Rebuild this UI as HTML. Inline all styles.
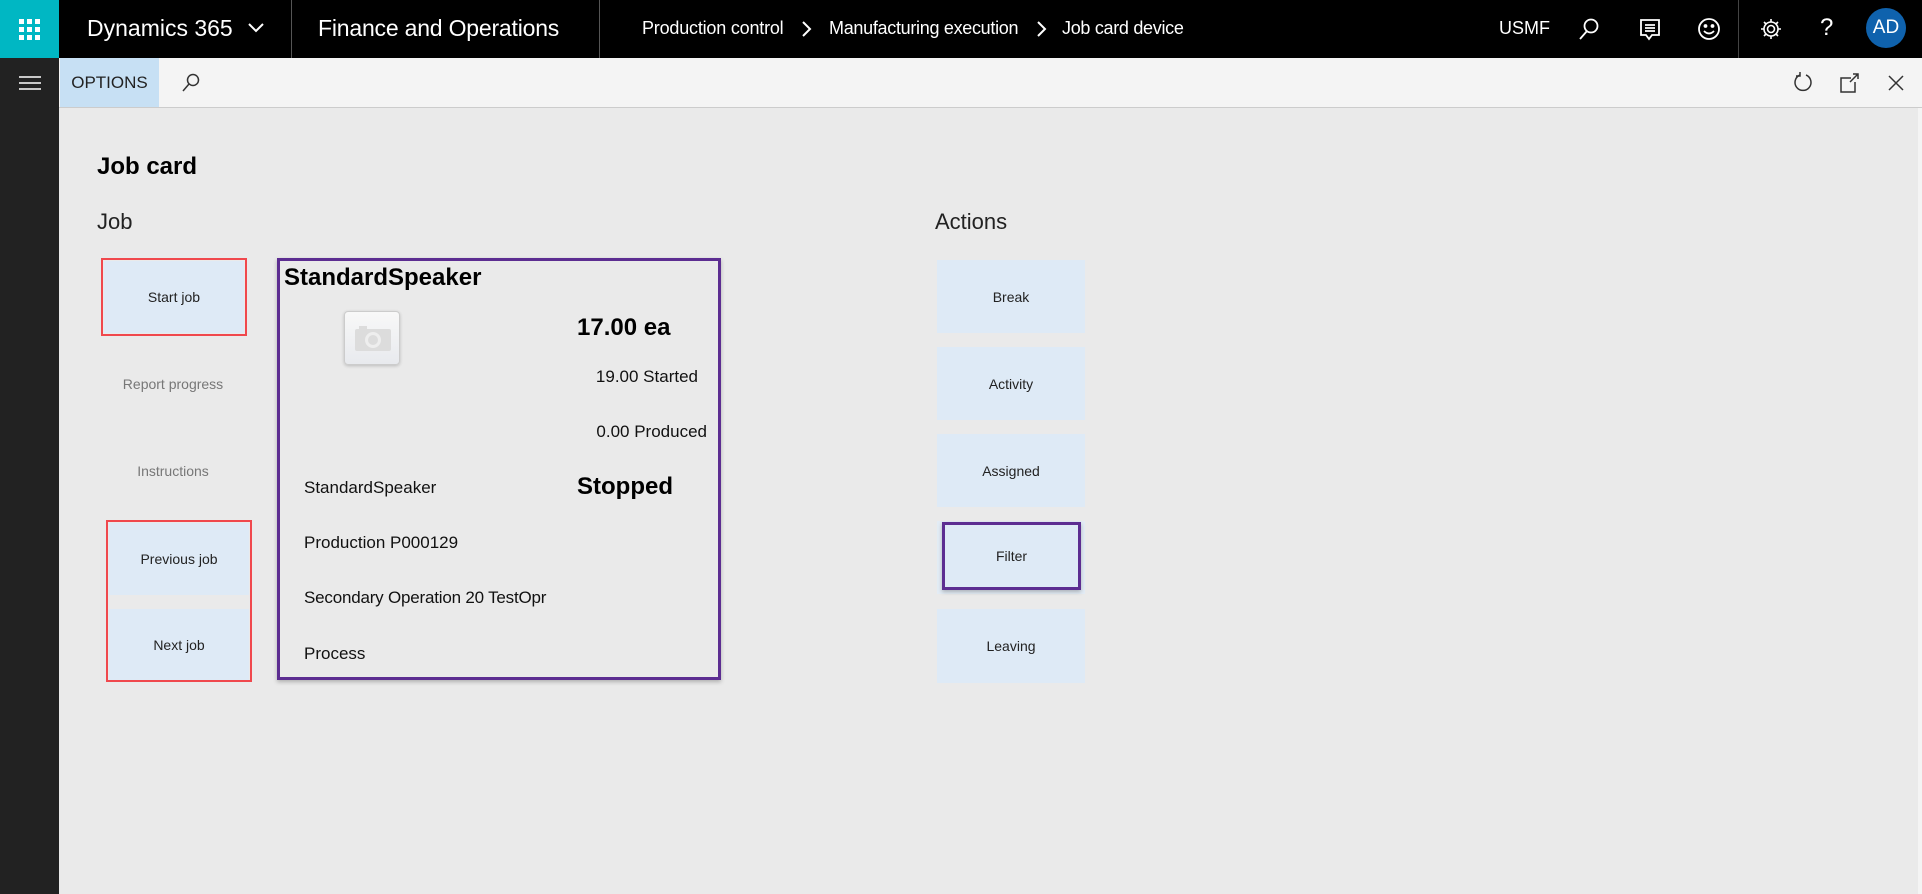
<!DOCTYPE html>
<html><head><meta charset="utf-8"><style>
*{margin:0;padding:0;box-sizing:border-box}
body{width:1922px;height:894px;overflow:hidden;background:#eaeaea;font-family:"Liberation Sans",sans-serif;position:relative;color:#000}
.a{position:absolute;white-space:nowrap}
.top{left:0;top:0;width:1922px;height:58px;background:#000;color:#fff}
.btn{position:absolute;background:#deeaf6;font-size:14px;color:#222;display:flex;align-items:center;justify-content:center}
.red{position:absolute;border:2px solid #f0484d}
.t{font-size:17px;color:#111}
</style></head><body>
<div class="a top"></div>
<div class="a" style="left:0;top:0;width:59px;height:58px;background:#00b7c3"></div>
<svg class="a" style="left:19px;top:19px" width="21" height="21" fill="#fff"><g><rect x="0" y="0" width="5" height="5"/><rect x="8" y="0" width="5" height="5"/><rect x="16" y="0" width="5" height="5"/><rect x="0" y="8" width="5" height="5"/><rect x="8" y="8" width="5" height="5"/><rect x="16" y="8" width="5" height="5"/><rect x="0" y="16" width="5" height="5"/><rect x="8" y="16" width="5" height="5"/><rect x="16" y="16" width="5" height="5"/></g></svg>
<div class="a" style="left:87px;top:15px;font-size:23px;color:#fff">Dynamics 365</div>
<svg class="a" style="left:247px;top:22px" width="18" height="12"><path d="M2 2l7 7 7-7" stroke="#fff" stroke-width="2" fill="none"/></svg>
<div class="a" style="left:291px;top:0;width:1px;height:58px;background:#555"></div>
<div class="a" style="left:318px;top:15px;font-size:23px;color:#fff;letter-spacing:-0.2px">Finance and Operations</div>
<div class="a" style="left:599px;top:0;width:1px;height:58px;background:#555"></div>
<div class="a" style="left:642px;top:18px;font-size:18px;color:#fff;letter-spacing:-0.2px">Production control</div>
<svg class="a" style="left:800px;top:20px" width="12" height="18"><path d="M3 2l7 7-7 7" stroke="#fff" stroke-width="2" fill="none"/></svg>
<div class="a" style="left:829px;top:18px;font-size:18px;color:#fff;letter-spacing:-0.3px">Manufacturing execution</div>
<svg class="a" style="left:1035px;top:20px" width="12" height="18"><path d="M3 2l7 7-7 7" stroke="#fff" stroke-width="2" fill="none"/></svg>
<div class="a" style="left:1062px;top:18px;font-size:18px;color:#fff;letter-spacing:-0.3px">Job card device</div>
<div class="a" style="left:1499px;top:18px;font-size:18px;color:#fff">USMF</div>
<svg class="a" style="left:1577px;top:17px" width="24" height="24" fill="none" stroke="#fff" stroke-width="1.8"><circle cx="14" cy="9" r="6.5"/><path d="M10 14L3 22"/></svg>
<svg class="a" style="left:1639px;top:18px" width="24" height="24" fill="none" stroke="#fff" stroke-width="1.8"><path d="M2 2h18v15h-7l-3 4-3-4H2z"/><path d="M6 7h10M6 10h10M6 13h10"/></svg>
<svg class="a" style="left:1696px;top:16px" width="26" height="26" fill="none" stroke="#fff" stroke-width="1.8"><circle cx="13" cy="13" r="10"/><circle cx="9.5" cy="10" r="1" fill="#fff"/><circle cx="16.5" cy="10" r="1" fill="#fff"/><path d="M8 15q5 5 10 0"/></svg>
<div class="a" style="left:1738px;top:0;width:1px;height:58px;background:#444"></div>
<svg class="a" style="left:1759px;top:17px" width="24" height="24" fill="none" stroke="#fff" stroke-width="1.6"><circle cx="12" cy="12" r="3.5"/><path d="M12 2v3M12 19v3M2 12h3M19 12h3M5 5l2 2M17 17l2 2M5 19l2-2M17 7l2-2"/><circle cx="12" cy="12" r="7"/></svg>
<div class="a" style="left:1820px;top:14px;font-size:24px;color:#fff">?</div>
<div class="a" style="left:1866px;top:8px;width:40px;height:40px;border-radius:50%;background:#0f62ad;color:#fff;font-size:19px;display:flex;align-items:center;justify-content:center">AD</div>
<div class="a" style="left:0;top:58px;width:59px;height:836px;background:#222"></div>
<svg class="a" style="left:19px;top:75px" width="22" height="16" stroke="#fff" stroke-width="1.6"><path d="M0 2h22M0 8h22M0 14h22"/></svg>
<div class="a" style="left:59px;top:58px;width:1863px;height:50px;background:#f4f4f4;border-bottom:1px solid #ccc"></div>
<div class="a" style="left:60px;top:58px;width:99px;height:49px;background:#c7e0f4;font-size:17px;color:#222;display:flex;align-items:center;justify-content:center">OPTIONS</div>
<svg class="a" style="left:180px;top:72px" width="22" height="22" fill="none" stroke="#333" stroke-width="1.5"><circle cx="13" cy="8" r="5.5"/><path d="M9 12l-6 7"/></svg>
<svg class="a" style="left:1792px;top:71px" width="22" height="24" fill="none" stroke="#333" stroke-width="1.5"><path d="M8 4A8 8 0 1 0 14 4"/><path d="M8 1v4H4"/></svg>
<svg class="a" style="left:1838px;top:72px" width="22" height="22" fill="none" stroke="#333" stroke-width="1.5"><path d="M13 6H3v14h14V10"/><path d="M12 10l8-8M15 2h5v5"/></svg>
<svg class="a" style="left:1887px;top:74px" width="18" height="18" stroke="#333" stroke-width="1.5"><path d="M2 2l14 14M16 2L2 16"/></svg>
<div class="a" style="left:1918px;top:108px;width:4px;height:786px;background:#f4f4f4"></div>

<div class="a" style="left:97px;top:153px;font-size:24px;font-weight:bold">Job card</div>
<div class="a" style="left:97px;top:209px;font-size:22px;color:#222">Job</div>
<div class="a" style="left:935px;top:209px;font-size:22px;color:#222">Actions</div>

<div class="red" style="left:101px;top:258px;width:146px;height:78px"></div>
<div class="btn" style="left:104px;top:261px;width:140px;height:72px">Start job</div>
<div class="a" style="left:103px;top:376px;width:140px;text-align:center;font-size:14px;color:#777">Report progress</div>
<div class="a" style="left:103px;top:463px;width:140px;text-align:center;font-size:14px;color:#777">Instructions</div>
<div class="red" style="left:106px;top:520px;width:146px;height:162px"></div>
<div class="btn" style="left:109px;top:523px;width:140px;height:72px">Previous job</div>
<div class="btn" style="left:109px;top:609px;width:140px;height:71px">Next job</div>

<div class="a" style="left:277px;top:258px;width:444px;height:422px;border:3px solid #5c2d91;box-shadow:0 2px 4px rgba(0,0,0,.25)"></div>
<div class="a" style="left:284px;top:264px;font-size:24px;font-weight:bold">StandardSpeaker</div>
<div class="a" style="left:344px;top:311px;width:56px;height:54px;border:1px solid #ccc;border-radius:4px;background:linear-gradient(#f8f8f8,#e8eaee);box-shadow:0 1px 3px rgba(0,0,0,.2)"></div>
<svg class="a" style="left:353px;top:323px" width="40" height="30" fill="#dcdcdc"><rect x="2" y="6" width="36" height="22" rx="2"/><rect x="6" y="3" width="8" height="4"/><circle cx="20" cy="17" r="8" fill="#eee"/><circle cx="20" cy="17" r="5" fill="#dcdcdc"/></svg>
<div class="a" style="left:577px;top:314px;font-size:24px;font-weight:bold">17.00 ea</div>
<div class="a t" style="right:1224px;top:367px">19.00 Started</div>
<div class="a t" style="right:1215px;top:422px">0.00 Produced</div>
<div class="a t" style="left:304px;top:478px">StandardSpeaker</div>
<div class="a" style="left:577px;top:473px;font-size:24px;font-weight:bold">Stopped</div>
<div class="a t" style="left:304px;top:533px">Production P000129</div>
<div class="a t" style="left:304px;top:588px;letter-spacing:-0.2px">Secondary Operation 20 TestOpr</div>
<div class="a t" style="left:304px;top:644px">Process</div>

<div class="btn" style="left:937px;top:260px;width:148px;height:73px">Break</div>
<div class="btn" style="left:937px;top:347px;width:148px;height:73px">Activity</div>
<div class="btn" style="left:937px;top:434px;width:148px;height:73px">Assigned</div>
<div class="btn" style="left:937px;top:521px;width:148px;height:73px;background:#e3ecf5"></div>
<div class="btn" style="left:942px;top:522px;width:139px;height:68px;border:3px solid #5c2d91;box-shadow:0 2px 4px rgba(0,0,0,.25)">Filter</div>
<div class="btn" style="left:937px;top:609px;width:148px;height:74px">Leaving</div>
</body></html>
